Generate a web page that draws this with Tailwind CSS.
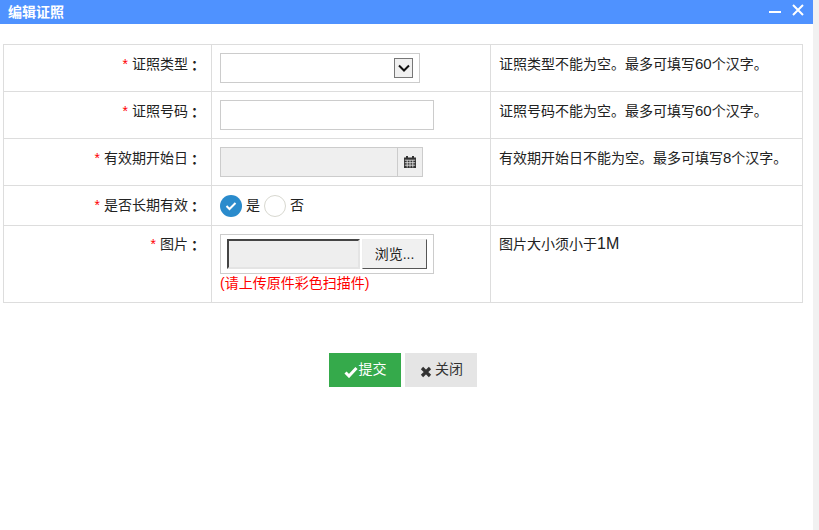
<!DOCTYPE html>
<html lang="zh-CN">
<head>
    <meta charset="UTF-8">
    <meta name="viewport" content="width=device-width, initial-scale=1.0">
    <title>编辑证照</title>
    <script src="https://cdn.jsdelivr.net/npm/@tailwindcss/browser@4"></script>
</head>
<body class="h-[530px] overflow-hidden bg-white flex font-['Liberation_Sans','Noto_Sans_CJK_SC',sans-serif] text-[14px] text-[#222]">
    <div class="w-[813px] shrink-0">
        <!-- Title bar -->
        <div class="h-6 bg-[#4f92ff] flex items-center justify-between pl-2 pr-[9px] text-white">
            <span class="font-bold text-[14px]">编辑证照</span>
            <div class="flex items-center gap-[11px] -translate-y-[2px]">
                <svg width="12" height="12" viewBox="0 0 12 12"><path d="M0 8h12" stroke="#fff" stroke-width="2"/></svg>
                <svg width="12" height="12" viewBox="0 0 12 12"><path d="M1 1l10 10M11 1L1 11" stroke="#fff" stroke-width="2"/></svg>
            </div>
        </div>

        <!-- Form table -->
        <table class="mt-5 ml-[3px] w-[800px] table-fixed border-collapse">
            <colgroup>
                <col class="w-[208px]">
                <col class="w-[279px]">
                <col>
            </colgroup>
            <tbody>
                <tr class="h-[47px]">
                    <td class="border border-[#ddd] pr-[9px] text-right align-top pt-[9px]"><span class="text-[#f00] mr-1">*</span>证照类型<span class="inline-block leading-none translate-x-[3px] translate-y-[1px] font-bold">：</span></td>
                    <td class="border border-[#ddd] px-2 align-middle">
                        <div class="w-[200px] h-[30px] border border-[#ccc] flex items-center justify-end pr-[6px]">
                            <div class="w-[19px] h-[20px] border border-[#777] bg-[#f0f0f0] flex items-center justify-center">
                                <svg width="12" height="8" viewBox="0 0 12 8"><path d="M1 1.5l5 5 5-5" fill="none" stroke="#111" stroke-width="2"/></svg>
                            </div>
                        </div>
                    </td>
                    <td class="border border-[#ddd] px-2 align-top pt-[9px]">证照类型不能为空。最多可填写<span class="text-[15px] leading-[14px]">60</span>个汉字。</td>
                </tr>
                <tr class="h-[47px]">
                    <td class="border border-[#ddd] pr-[9px] text-right align-top pt-[9px]"><span class="text-[#f00] mr-1">*</span>证照号码<span class="inline-block leading-none translate-x-[3px] translate-y-[1px] font-bold">：</span></td>
                    <td class="border border-[#ddd] px-2 align-middle">
                        <div class="w-[214px] h-[30px] border border-[#ccc]"></div>
                    </td>
                    <td class="border border-[#ddd] px-2 align-top pt-[9px]">证照号码不能为空。最多可填写<span class="text-[15px] leading-[14px]">60</span>个汉字。</td>
                </tr>
                <tr class="h-[47px]">
                    <td class="border border-[#ddd] pr-[9px] text-right align-top pt-[9px]"><span class="text-[#f00] mr-1">*</span>有效期开始日<span class="inline-block leading-none translate-x-[3px] translate-y-[1px] font-bold">：</span></td>
                    <td class="border border-[#ddd] px-2 align-middle">
                        <div class="w-[203px] h-[30px] border border-[#ccc] bg-[#efefef] flex">
                            <div class="flex-1"></div>
                            <div class="w-[25px] border-l border-[#ccc] flex items-center justify-center">
                                <svg width="12" height="12" viewBox="0 0 12 12"><path fill="#333" d="M2 0h2v1.5h4V0h2v1.5h2V12H0V1.5h2z"/><path stroke="#eee" stroke-width=".8" d="M.8 4.2h10.4M.8 6.7h10.4M.8 9.2h10.4M3.2 4.2V11.5M6 4.2V11.5M8.8 4.2V11.5"/></svg>
                            </div>
                        </div>
                    </td>
                    <td class="border border-[#ddd] px-2 align-top pt-[9px]">有效期开始日不能为空。最多可填写<span class="text-[15px] leading-[14px]">8</span>个汉字。</td>
                </tr>
                <tr class="h-10">
                    <td class="border border-[#ddd] pr-[9px] text-right align-middle"><span class="text-[#f00] mr-1">*</span>是否长期有效<span class="inline-block leading-none translate-x-[3px] translate-y-[1px] font-bold">：</span></td>
                    <td class="border border-[#ddd] px-2 align-middle">
                        <div class="flex items-center">
                            <span class="w-[22px] h-[22px] rounded-full bg-[#2a8bcc] flex items-center justify-center">
                                <svg width="12" height="10" viewBox="0 0 12 10"><path d="M1.5 5l3 3 6-6" fill="none" stroke="#fff" stroke-width="2"/></svg>
                            </span>
                            <span class="ml-1">是</span>
                            <span class="ml-1 w-[22px] h-[22px] rounded-full border border-[#d8d8d0] bg-white"></span>
                            <span class="ml-1">否</span>
                        </div>
                    </td>
                    <td class="border border-[#ddd]"></td>
                </tr>
                <tr class="h-[77px]">
                    <td class="border border-[#ddd] pr-[9px] text-right align-top pt-2"><span class="text-[#f00] mr-1">*</span>图片<span class="inline-block leading-none translate-x-[3px] translate-y-[1px] font-bold">：</span></td>
                    <td class="border border-[#ddd] px-2 align-top pt-2">
                        <div class="w-[214px] h-10 border border-[#ccc] flex items-center pl-[6px] gap-[2px]">
                            <div class="w-[133px] h-[30px] bg-[#eee] border-2 border-t-[#444] border-l-[#444] border-r-[#e4e4e4] border-b-[#e4e4e4]"></div>
                            <div class="w-[65px] h-[30px] bg-[#f0f0f0] border border-t-[#eee] border-l-[#eee] border-r-[#555] border-b-[#555] flex items-center justify-center text-[14px]">浏览...</div>
                        </div>
                        <div class="text-[#f00] leading-5 -mt-px">(请上传原件彩色扫描件)</div>
                    </td>
                    <td class="border border-[#ddd] px-2 align-top pt-2">图片大小须小于<span class="text-[16px] leading-[14px]">1M</span></td>
                </tr>
            </tbody>
        </table>

        <!-- Actions -->
        <div class="mt-[50px] ml-[329px] flex gap-1">
            <button class="w-[72px] h-[34px] bg-[#35aa4b] text-white flex items-center justify-center">
                <svg class="mt-1" width="14" height="12" viewBox="0 0 14 12"><path d="M1.5 6.5l3.5 3.5 7.5-8" fill="none" stroke="#fff" stroke-width="3"/></svg>
                <span class="-mt-[2px] ml-[1px]">提交</span>
            </button>
            <button class="w-[72px] h-[34px] bg-[#e5e5e5] text-[#333] flex items-center justify-center pl-[1px]">
                <svg class="mt-1" width="12" height="12" viewBox="0 0 12 12"><path d="M2 2l8 8M10 2l-8 8" fill="none" stroke="#333" stroke-width="3.2"/></svg>
                <span class="-mt-[2px] ml-[3px]">关闭</span>
            </button>
        </div>
    </div>
    <!-- Scrollbar track -->
    <div class="w-[6px] h-full bg-[#f1f1f1]"></div>
</body>
</html>
